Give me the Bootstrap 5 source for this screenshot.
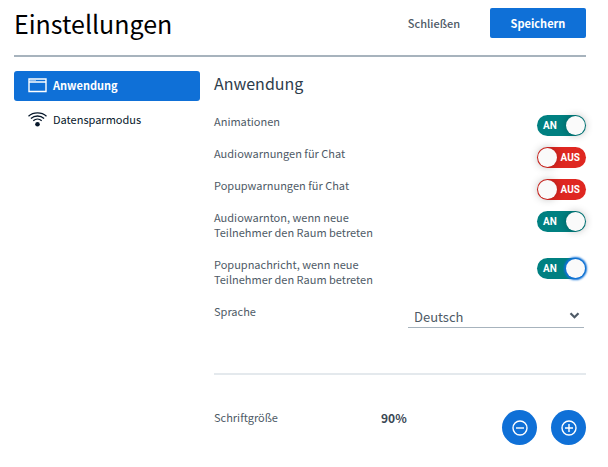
<!DOCTYPE html>
<html lang="de">
<head>
<meta charset="utf-8">
<meta name="viewport" content="width=device-width, initial-scale=1">
<title>Einstellungen</title>
<link href="https://cdn.jsdelivr.net/npm/bootstrap@5.3.0/dist/css/bootstrap.min.css" rel="stylesheet">
<style>
  :root { --brand: #0f70d7; --ink: #06172a; --muted-ink: #4e5a66; --on: #008081; --off: #df2721; }
  body { font-family: "Noto Sans CJK SC", "Source Sans Pro", sans-serif; font-size: 11px; line-height: 15px; color: var(--muted-ink); background: #fff; }
  .settings { padding: 8px 22px 22px 14px; }
  .settings-head { padding-bottom: 17px; border-bottom: 2px solid #a7b3bd; gap: 8px; }
  .settings-title { font-size: 25px; line-height: 30px; font-weight: 400; color: #000; }
  .head-btn { width: 96px; height: 30px; padding: 0; border: 0; border-radius: 2px; font-size: 11px; line-height: 30px; }
  .head-btn.btn-link { color: var(--muted-ink); font-weight: 500; }
  .btn-brand, .btn-brand:hover { background: var(--brand); color: #fff; font-weight: 700; }
  .settings-body { display: grid; grid-template-columns: 1fr 2fr; gap: 14px; padding-top: 14px; }
  .side-nav { gap: 4px; }
  .side-nav .nav-link { display: flex; align-items: center; gap: 6px; height: 30px; padding: 0 14px 2px; border-radius: 3px; color: var(--ink); }
  .side-nav .nav-link.active { background: var(--brand); color: #fff; font-weight: 700; }
  .pane-title { font-size: 16px; line-height: 24px; font-weight: 400; color: #2d3c4b; margin-bottom: 19px; }
  .setting-label { padding-bottom: 17px; max-width: 180px; }
  .toggle { display: grid; width: 49px; height: 21px; margin-top: 1px; }
  .toggle input, .toggle span { grid-area: 1 / 1; }
  .toggle input { appearance: none; display: flex; align-items: center; width: 49px; height: 21px; margin: 0; padding: 0 1px; border-radius: 11px; background: var(--off); outline: 0; cursor: pointer; }
  .toggle input::before { content: ""; width: 19px; height: 19px; border-radius: 50%; background: #fafafa; box-shadow: 0 0 9px rgba(0, 0, 0, .3); }
  .toggle input:checked { background: var(--on); justify-content: flex-end; }
  .toggle input:focus::before { box-shadow: 0 0 2px 2px var(--brand); }
  .toggle span { z-index: 1; align-self: center; justify-self: end; padding: 0 6px; font: 700 10px/12px Roboto, Arial, sans-serif; color: #fff; pointer-events: none; }
  .toggle input:checked + span { justify-self: start; }
  .lang-cell { padding: 0 2px 0 8px; }
  .lang-cell .form-select { height: 24px; padding: 2px 20px 0 6px; border: 0; border-bottom: 1px solid #a7b3bd; border-radius: 0; color: var(--muted-ink); font-size: 13px; line-height: 20px; box-shadow: none; background-color: #fff; background-position: right 4px top 8px; background-size: 11px 7px;
    background-image: url("data:image/svg+xml,%3Csvg xmlns='http://www.w3.org/2000/svg' viewBox='0 0 11 7'%3E%3Cpath d='M1.5 1.2l4 4 4-4' fill='none' stroke='%234e5a66' stroke-width='2.2'/%3E%3C/svg%3E"); }
  .divider { height: 2px; margin: 45px 0 35px; border: 0; background: #e4e9ed; opacity: 1; }
  .zoom-value { padding-left: 12px; font-size: 12px; color: #3a4754; }
  .zoom-btns { gap: 14px; }
  .round-btn { display: flex; align-items: center; justify-content: center; width: 35px; height: 35px; padding: 0; border: 0; border-radius: 50%; }
</style>
</head>
<body>
<main class="settings">
  <header class="settings-head d-flex align-items-center">
    <h1 class="settings-title mb-0 me-auto">Einstellungen</h1>
    <button type="button" class="btn btn-link head-btn text-decoration-none">Schließen</button>
    <button type="button" class="btn btn-brand head-btn">Speichern</button>
  </header>
  <div class="settings-body">
    <nav class="nav flex-column side-nav" aria-label="Einstellungen">
      <a class="nav-link active" href="#anwendung" aria-current="page">
        <svg width="19" height="15" viewBox="0 0 19 15" fill="none" stroke="currentColor" aria-hidden="true"><path d="M1 1h17v12.500H1zM1 4h17" stroke-width="1.400"/><path d="M2.500 2.500h1M4.500 2.500h1M6.500 2.500h1"/></svg>
        Anwendung</a>
      <a class="nav-link" href="#daten">
        <svg width="19" height="15" viewBox="0 0 19 15" fill="none" stroke="currentColor" stroke-width="1.300" aria-hidden="true"><path d="M.5 4.200C5.500-.2 13.500-.2 18.500 4.200M2.900 6.400c3.800-3.200 9.400-3.200 13.200 0M5.300 8.700c2.400-2 6-2 8.400 0"/><circle cx="9.500" cy="12.200" r="2.300" fill="currentColor" stroke="none"/></svg>
        Datensparmodus</a>
    </nav>
    <section id="anwendung">
      <h2 class="pane-title">Anwendung</h2>
      <div class="d-flex justify-content-between">
        <label class="setting-label" for="s1">Animationen</label>
        <div class="toggle"><input id="s1" type="checkbox" role="switch" checked><span>AN</span></div>
      </div>
      <div class="d-flex justify-content-between">
        <label class="setting-label" for="s2">Audiowarnungen für Chat</label>
        <div class="toggle"><input id="s2" type="checkbox" role="switch"><span>AUS</span></div>
      </div>
      <div class="d-flex justify-content-between">
        <label class="setting-label" for="s3">Popupwarnungen für Chat</label>
        <div class="toggle"><input id="s3" type="checkbox" role="switch"><span>AUS</span></div>
      </div>
      <div class="d-flex justify-content-between">
        <label class="setting-label" for="s4">Audiowarnton, wenn neue Teilnehmer den Raum betreten</label>
        <div class="toggle"><input id="s4" type="checkbox" role="switch" checked><span>AN</span></div>
      </div>
      <div class="d-flex justify-content-between">
        <label class="setting-label" for="s5">Popupnachricht, wenn neue Teilnehmer den Raum betreten</label>
        <div class="toggle"><input id="s5" type="checkbox" role="switch" checked autofocus><span>AN</span></div>
      </div>
      <div class="d-flex">
        <label class="w-50" for="lang">Sprache</label>
        <div class="w-50 lang-cell"><select id="lang" class="form-select"><option>Deutsch</option></select></div>
      </div>
      <hr class="divider">
      <div class="row g-0">
        <div class="col-5">Schriftgröße</div>
        <div class="col zoom-value fw-bold">90%</div>
        <div class="col-auto d-flex zoom-btns">
          <button type="button" class="btn btn-brand round-btn" aria-label="Schrift verkleinern"><svg width="16" height="16" viewBox="0 0 16 16" fill="none" stroke="currentColor" stroke-width="1.400" aria-hidden="true"><circle cx="8" cy="8" r="7"/><path d="M4 8h8"/></svg></button>
          <button type="button" class="btn btn-brand round-btn" aria-label="Schrift vergrößern"><svg width="16" height="16" viewBox="0 0 16 16" fill="none" stroke="currentColor" stroke-width="1.400" aria-hidden="true"><circle cx="8" cy="8" r="7"/><path d="M4 8h8M8 4v8"/></svg></button>
        </div>
      </div>
    </section>
  </div>
</main>
<script src="https://cdn.jsdelivr.net/npm/bootstrap@5.3.0/dist/js/bootstrap.bundle.min.js"></script>
</body>
</html>
